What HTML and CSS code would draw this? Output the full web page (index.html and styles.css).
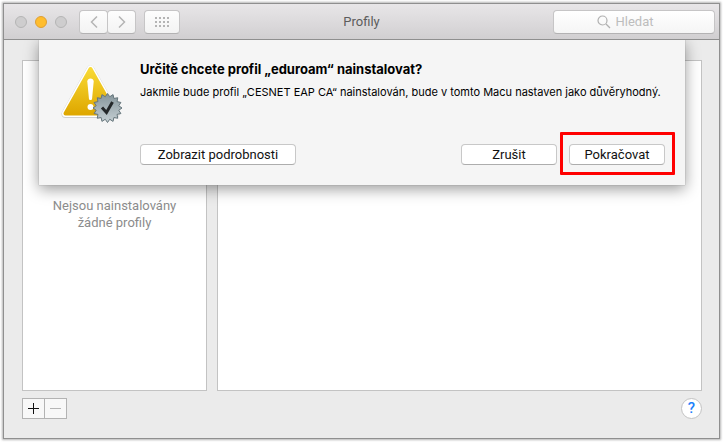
FILE: index.html
```html
<!DOCTYPE html>
<html lang="cs">
<head>
    <meta charset="UTF-8">
    <meta name="viewport" content="width=device-width, initial-scale=1.0">
    <title>Profily</title>
    <link rel="stylesheet" href="styles.css">
</head>
<body>
    <div class="window">
        <header class="toolbar">
            <div class="toolbar-left">
                <div class="lights">
                    <span class="light"></span>
                    <span class="light light-yellow"></span>
                    <span class="light"></span>
                </div>
                <div class="nav">
                    <button class="tool-button" aria-label="Zpět">
                        <svg width="10" height="14" viewBox="0 0 10 14"><path d="M8 1.5 2.5 7 8 12.5"/></svg>
                    </button>
                    <button class="tool-button" aria-label="Vpřed">
                        <svg width="10" height="14" viewBox="0 0 10 14"><path d="M2 1.5 7.5 7 2 12.5"/></svg>
                    </button>
                </div>
                <button class="tool-button show-all" aria-label="Zobrazit vše">
                    <svg width="14" height="10" viewBox="0 0 14 10"><path class="dots" d="M0 1h14M0 5h14M0 9h14"/></svg>
                </button>
            </div>
            <h1 class="title">Profily</h1>
            <label class="search">
                <svg width="14" height="14" viewBox="0 0 14 14"><circle cx="5.5" cy="5.5" r="4.5"/><path d="m9 9 4 4"/></svg>
                <input class="search-input" type="search" placeholder="Hledat" aria-label="Hledat">
            </label>
        </header>

        <main class="content">
            <div class="panels">
                <div class="profile-list">
                    <p class="empty">Nejsou nainstalovány žádné profily</p>
                </div>
                <div class="profile-detail"></div>
            </div>
            <div class="footer">
                <div class="add-remove">
                    <button class="square-button" aria-label="Přidat">
                        <svg width="11" height="11" viewBox="0 0 11 11"><path d="M0 5.5h11M5.5 0v11"/></svg>
                    </button>
                    <button class="square-button" aria-label="Odebrat" disabled>
                        <svg width="11" height="11" viewBox="0 0 11 11"><path d="M0 5.5h11"/></svg>
                    </button>
                </div>
                <button class="help" aria-label="Nápověda">?</button>
            </div>

            <section class="sheet" role="dialog" aria-labelledby="sheet-title">
                <svg class="warning-icon" width="64" height="64" viewBox="0 0 64 64">
                    <defs>
                        <linearGradient id="yellow" x1="0" y1="0" x2="0" y2="1">
                            <stop offset="0" stop-color="#f8d935"/>
                            <stop offset="1" stop-color="#dfa800"/>
                        </linearGradient>
                        <linearGradient id="steel" x1="0" y1="0" x2="0" y2="1">
                            <stop offset="0" stop-color="#84949a"/>
                            <stop offset="1" stop-color="#c6d0d4"/>
                        </linearGradient>
                    </defs>
                    <path class="triangle-shadow" d="M31.5 8.5 56.5 53H6.5Z"/>
                    <path class="triangle-edge" d="M31.5 8 56.5 52.5H6.5Z"/>
                    <path class="triangle" d="M31.5 8 56.5 52.5H6.5Z"/>
                    <path class="mark" d="M28.3 20.5c0-4 6.4-4 6.4 0l-1.6 17c-.2 2-3 2-3.2 0z"/>
                    <circle class="mark" cx="31.5" cy="46" r="3"/>
                    <path id="gear" class="gear" d=""/>
                    <path class="tick" d="m43 46.5 4.5 5 6-10.5"/>
                </svg>
                <div class="sheet-body">
                    <h2 id="sheet-title" class="sheet-title">Určitě chcete profil „eduroam“ nainstalovat?</h2>
                    <p class="sheet-text">Jakmile bude profil „CESNET EAP CA“ nainstalován, bude v tomto Macu nastaven jako důvěryhodný.</p>
                    <div class="actions">
                        <button class="button button-details">Zobrazit podrobnosti</button>
                        <button class="button">Zrušit</button>
                        <div class="highlighted">
                            <button class="button">Pokračovat</button>
                        </div>
                    </div>
                </div>
            </section>
        </main>
    </div>

    <script>
        // toothed edge of the badge
        const teeth = 16;
        const points = [];
        for (let i = 0; i < teeth * 2; i++) {
            const radius = i % 2 ? 11.5 : 14.5;
            const angle = Math.PI * i / teeth;
            points.push((48.5 + radius * Math.sin(angle)).toFixed(2) + " " + (47 - radius * Math.cos(angle)).toFixed(2));
        }
        document.getElementById("gear").setAttribute("d", "M" + points.join("L") + "Z");
    </script>
</body>
</html>
```
FILE: styles.css
```css
* {
    box-sizing: border-box;
}
body {
    margin: 0;
    padding: 3px;
    height: 100vh;
    background: #fff;
    font-family: Roboto, "Liberation Sans", sans-serif;
    font-size: 13px;
}
h1, h2, p {
    margin: 0;
}
button {
    padding: 0;
    font-family: inherit;
    font-size: 13px;
}
.window {
    display: flex;
    flex-direction: column;
    height: 100%;
    border: 1px solid #8f8f8f;
    background: #ebebeb;
    box-shadow: 0 0 2px 1px #b5b5b5;
}

/* toolbar */
.toolbar {
    display: grid;
    grid-template-columns: 1fr auto 1fr;
    align-items: center;
    height: 36px;
    padding: 0 4px;
    border-bottom: 1px solid #8f8f8f;
    background: linear-gradient(#e8e6e8, #d1cfd1);
}
.toolbar-left {
    display: flex;
    align-items: center;
    gap: 8px;
    padding-left: 7px;
}
.lights {
    display: flex;
    gap: 8px;
    margin-right: 4px;
}
.light {
    width: 12px;
    height: 12px;
    border: 1px solid #b5b5b5;
    border-radius: 50%;
    background: #cecdce;
}
.light-yellow {
    border-color: #de9f34;
    background: #ffbd2e;
}
.nav {
    display: flex;
}
.tool-button {
    display: flex;
    align-items: center;
    justify-content: center;
    width: 29px;
    height: 24px;
    border: 1px solid #c6c5c6;
    border-bottom-color: #b3b2b3;
    border-radius: 4px;
    background: linear-gradient(#fdfdfd, #f3f3f3);
}
.tool-button + .tool-button {
    margin-left: -1px;
}
.show-all {
    width: 36px;
}
.tool-button path {
    fill: none;
    stroke: #b4b4b4;
    stroke-width: 1.5;
}
.tool-button .dots {
    stroke-width: 2;
    stroke-dasharray: 2 2;
}
.title {
    font-size: 13px;
    font-weight: 400;
    line-height: 16px;
    color: #5c5c5c;
}
.search {
    display: flex;
    align-items: center;
    justify-content: center;
    justify-self: end;
    gap: 5px;
    width: 162px;
    height: 24px;
    border: 1px solid #c6c5c6;
    border-bottom-color: #b3b2b3;
    border-radius: 4px;
    background: linear-gradient(#fff, #f5f5f5);
}
.search svg {
    fill: none;
    stroke: #b0b0b0;
    stroke-width: 1.2;
}
.search-input {
    width: 56px;
    padding: 0;
    border: 0;
    outline: 0;
    background: none;
    font-family: inherit;
    font-size: 13px;
}
.search-input::placeholder {
    color: #bdbdbd;
}

/* content */
.content {
    position: relative;
    display: flex;
    flex: 1;
    flex-direction: column;
    gap: 7px;
    padding: 20px 17px 19px 18px;
}
.panels {
    display: grid;
    flex: 1;
    grid-template-columns: 185px 1fr;
    gap: 10px;
}
.profile-list,
.profile-detail {
    display: flex;
    align-items: center;
    justify-content: center;
    border: 1px solid #c3c3c3;
    background: #fff;
}
.empty {
    width: 140px;
    padding-bottom: 24px;
    font-size: 13px;
    line-height: 17px;
    text-align: center;
    color: #8c8c8c;
}
.footer {
    display: flex;
    align-items: center;
    justify-content: space-between;
}
.add-remove {
    display: flex;
}
.square-button {
    display: flex;
    align-items: center;
    justify-content: center;
    width: 23px;
    height: 21px;
    border: 1px solid #b3b3b3;
    background: #f8f8f8;
}
.square-button + .square-button {
    margin-left: -1px;
}
.square-button path {
    stroke: #111;
}
.square-button:disabled path {
    stroke: #b5b5b5;
}
.help {
    width: 21px;
    height: 21px;
    border: 1px solid #c3c3c3;
    border-radius: 50%;
    background: #fff;
    font-size: 15px;
    font-weight: 500;
    line-height: 19px;
    color: #1a80fb;
}

/* confirmation sheet */
.sheet {
    position: absolute;
    top: 0;
    left: 35px;
    right: 34px;
    display: flex;
    gap: 17px;
    padding: 21px 20px 20px;
    background: #f5f5f5;
    box-shadow: 0 0 1px #888, 0 4px 14px rgba(0, 0, 0, 0.4);
    clip-path: inset(0 -30px -30px -30px);
}
.warning-icon {
    flex: none;
}
.triangle-shadow,
.triangle-edge,
.triangle {
    stroke-linejoin: round;
}
.triangle-shadow {
    fill: #b0b0b0;
    stroke: #d0d0d0;
    stroke-width: 8;
}
.triangle-edge {
    fill: #fff;
    stroke: #fff;
    stroke-width: 7;
}
.triangle {
    fill: url(#yellow);
    stroke: url(#yellow);
    stroke-width: 4;
}
.mark {
    fill: #fff;
}
.gear {
    fill: url(#steel);
    stroke: #65757b;
}
.tick {
    fill: none;
    stroke: #24282a;
    stroke-width: 3;
}
.sheet-body {
    flex: 1;
    min-width: 0;
}
.sheet-title {
    font-family: Inter, Roboto, sans-serif;
    font-size: 13px;
    font-weight: 700;
    line-height: 17px;
    color: #000;
}
.sheet-text {
    margin-top: 7px;
    font-family: Inter, Roboto, sans-serif;
    font-size: 11px;
    line-height: 14px;
    color: #000;
}
.actions {
    display: flex;
    gap: 12px;
    margin-top: 45px;
}
.button {
    width: 96px;
    height: 21px;
    border: 1px solid #c8c8c8;
    border-bottom-color: #adadad;
    border-radius: 4px;
    background: #fff;
    line-height: 19px;
    color: #111;
}
.button-details {
    width: 156px;
    margin-right: auto;
}
.highlighted {
    position: relative;
    display: flex;
}
.highlighted::after {
    content: "";
    position: absolute;
    inset: -12px -10px -10px -9px;
    border: 3px solid #f00;
    border-radius: 1px;
    pointer-events: none;
}
```
